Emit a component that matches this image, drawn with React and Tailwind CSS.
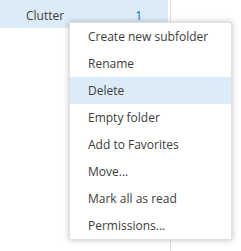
export default function App() {
  const items = [
    'Create new subfolder',
    'Rename',
    'Delete',
    'Empty folder',
    'Add to Favorites',
    'Move...',
    'Mark all as read',
    'Permissions...',
  ];

  return (
    <div className="relative w-[241px] h-[251px] bg-white overflow-hidden text-[12px] text-[#3c3c3c]" style={{ fontFamily: '"Open Sans", "Noto Sans", sans-serif' }}>
      {/* folder list */}
      <div className="flex h-full">
        <div className="w-[168px]">
          <div className="flex items-center justify-between h-[28px] pt-[4px] bg-[#dcebf8] pl-[26px] pr-[26px]">
            <span>Clutter</span>
            <span className="text-[#0072c6]">1</span>
          </div>
        </div>
        <div className="w-px ml-[2px] bg-[#e1e1e1]" />
      </div>

      {/* context menu */}
      <div className="absolute left-[69px] top-[22px] w-[163px] bg-white border border-[#e0e0e0] shadow-[0_0_6px_rgba(0,0,0,0.25)]">
        {items.map((item) => (
          <div
            key={item}
            className={`h-[27px] flex items-center pl-[18px] ${item === 'Delete' ? 'bg-[#dcebf8]' : ''}`}
          >
            {item}
          </div>
        ))}
      </div>
    </div>
  );
}
